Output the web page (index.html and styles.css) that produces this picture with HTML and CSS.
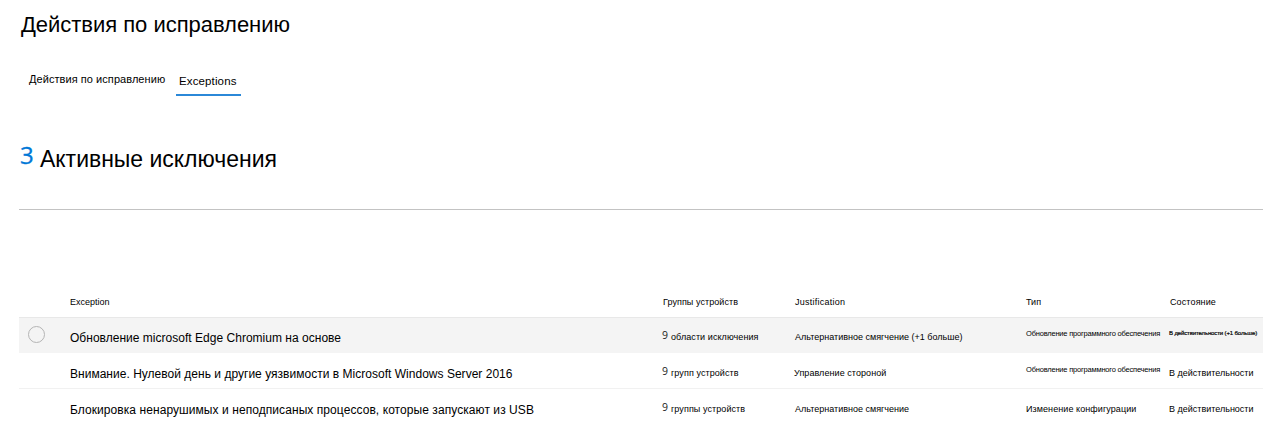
FILE: index.html
```html
<!DOCTYPE html>
<html lang="ru">
<head>
<meta charset="utf-8">
<title>Действия по исправлению</title>
<link rel="stylesheet" href="styles.css">
</head>
<body>
<main class="page">
  <h1 class="title">Действия по исправлению</h1>
  <nav class="tabs">
    <a class="tab tab-first">Действия по исправлению</a>
    <a class="tab tab-active">Exceptions</a>
  </nav>
  <section class="summary">
    <span class="count">3</span>
    <h2 class="summary-label">Активные исключения</h2>
  </section>
  <div class="table">
    <div class="row head">
      <span></span>
      <span>Exception</span>
      <span class="h-groups">Группы устройств</span>
      <span class="h-just">Justification</span>
      <span>Тип</span>
      <span class="h-state">Состояние</span>
    </div>
    <div class="row selected">
      <span class="radio"></span>
      <span class="name">Обновление microsoft Edge Chromium на основе</span>
      <span class="groups"><span class="num">9</span><span class="g-text">области исключения</span></span>
      <span>Альтернативное смягчение (+1 больше)</span>
      <span class="small">Обновление программного обеспечения</span>
      <span class="tiny">В действительности (+1 больше)</span>
    </div>
    <div class="row">
      <span></span>
      <span class="name">Внимание. Нулевой день и другие уязвимости в Microsoft Windows Server 2016</span>
      <span class="groups"><span class="num">9</span><span class="g-text">групп устройств</span></span>
      <span class="j-b">Управление стороной</span>
      <span class="small">Обновление программного обеспечения</span>
      <span>В действительности</span>
    </div>
    <div class="row last">
      <span></span>
      <span class="name name-c">Блокировка ненарушимых и неподписаных процессов, которые запускают из USB</span>
      <span class="groups"><span class="num">9</span><span class="g-text">группы устройств</span></span>
      <span>Альтернативное смягчение</span>
      <span class="t-c">Изменение конфигурации</span>
      <span>В действительности</span>
    </div>
  </div>
</main>
</body>
</html>
```
FILE: styles.css
```css
* { box-sizing: border-box; }
body {
  margin: 0;
  background: #fff;
  color: #000;
  font-family: "Liberation Sans", Arial, sans-serif;
  overflow: hidden;
}
.page {
  height: 424px;
  padding-left: 19px;
  white-space: nowrap;
}
.title, .summary-label {
  margin: 0;
  font-size: 22px;
  font-weight: 400;
  line-height: 30px;
}
.title { padding: 10px 0 0 2px; height: 69px; letter-spacing: -0.03px; }
.summary-label { font-size: 23px; letter-spacing: -0.02px; }
.tabs { display: flex; height: 27px; padding-left: 10px; }
.tab { font-size: 11px; line-height: 20px; }
.tab-first { width: 147px; letter-spacing: 0.06px; }
.tab-active {
  width: 65px;
  padding: 2px 3px 0;
  border-bottom: 2px solid #2b88d8;
  font-size: 11.5px;
  letter-spacing: 0.13px;
}
.summary {
  display: flex;
  height: 114px;
  padding-top: 48px;
  border-bottom: 1px solid #c3c3c3;
}
.count {
  width: 21px;
  padding-left: 1px;
  font: 24px/22px "Open Sans", sans-serif;
  color: #0078d7;
  -webkit-text-stroke: 0.3px #0078d7;
}
.table { padding-top: 77px; }
.row {
  display: grid;
  grid-template-columns: 51px 592px 133px 231px 143px 1fr;
  height: 36px;
  padding-top: 10px;
  border-bottom: 1px solid #f1f1f1;
  font-size: 9px;
  line-height: 20px;
}
.head { height: 31px; padding-top: 5px; border-color: #e8e8e8; }
.h-groups { padding-left: 1px; letter-spacing: 0.07px; }
.h-just { letter-spacing: 0.25px; }
.h-state { padding-left: 1px; letter-spacing: 0.12px; }
.selected { height: 35px; padding-top: 9px; background: #f4f4f4; border: 0; }
.last { border: 0; }
.radio {
  width: 17px;
  height: 17px;
  margin: -1px 0 0 9px;
  border: 1px solid #b4b4b4;
  border-radius: 50%;
}
.name { font-size: 12px; padding-top: 1px; letter-spacing: 0.02px; }
.name-c { letter-spacing: 0.07px; }
.groups { display: flex; }
.num { width: 9px; font: 10.5px/17px "Open Sans", sans-serif; color: #222; }
.g-text { letter-spacing: 0.08px; }
.j-b { margin-left: -1px; letter-spacing: 0.07px; }
.t-c { letter-spacing: 0.08px; }
.small { font-size: 7.5px; line-height: 14px; letter-spacing: -0.2px; }
.tiny { font-size: 6px; line-height: 13px; letter-spacing: -0.13px; -webkit-text-stroke: 0.2px #000; }
```
